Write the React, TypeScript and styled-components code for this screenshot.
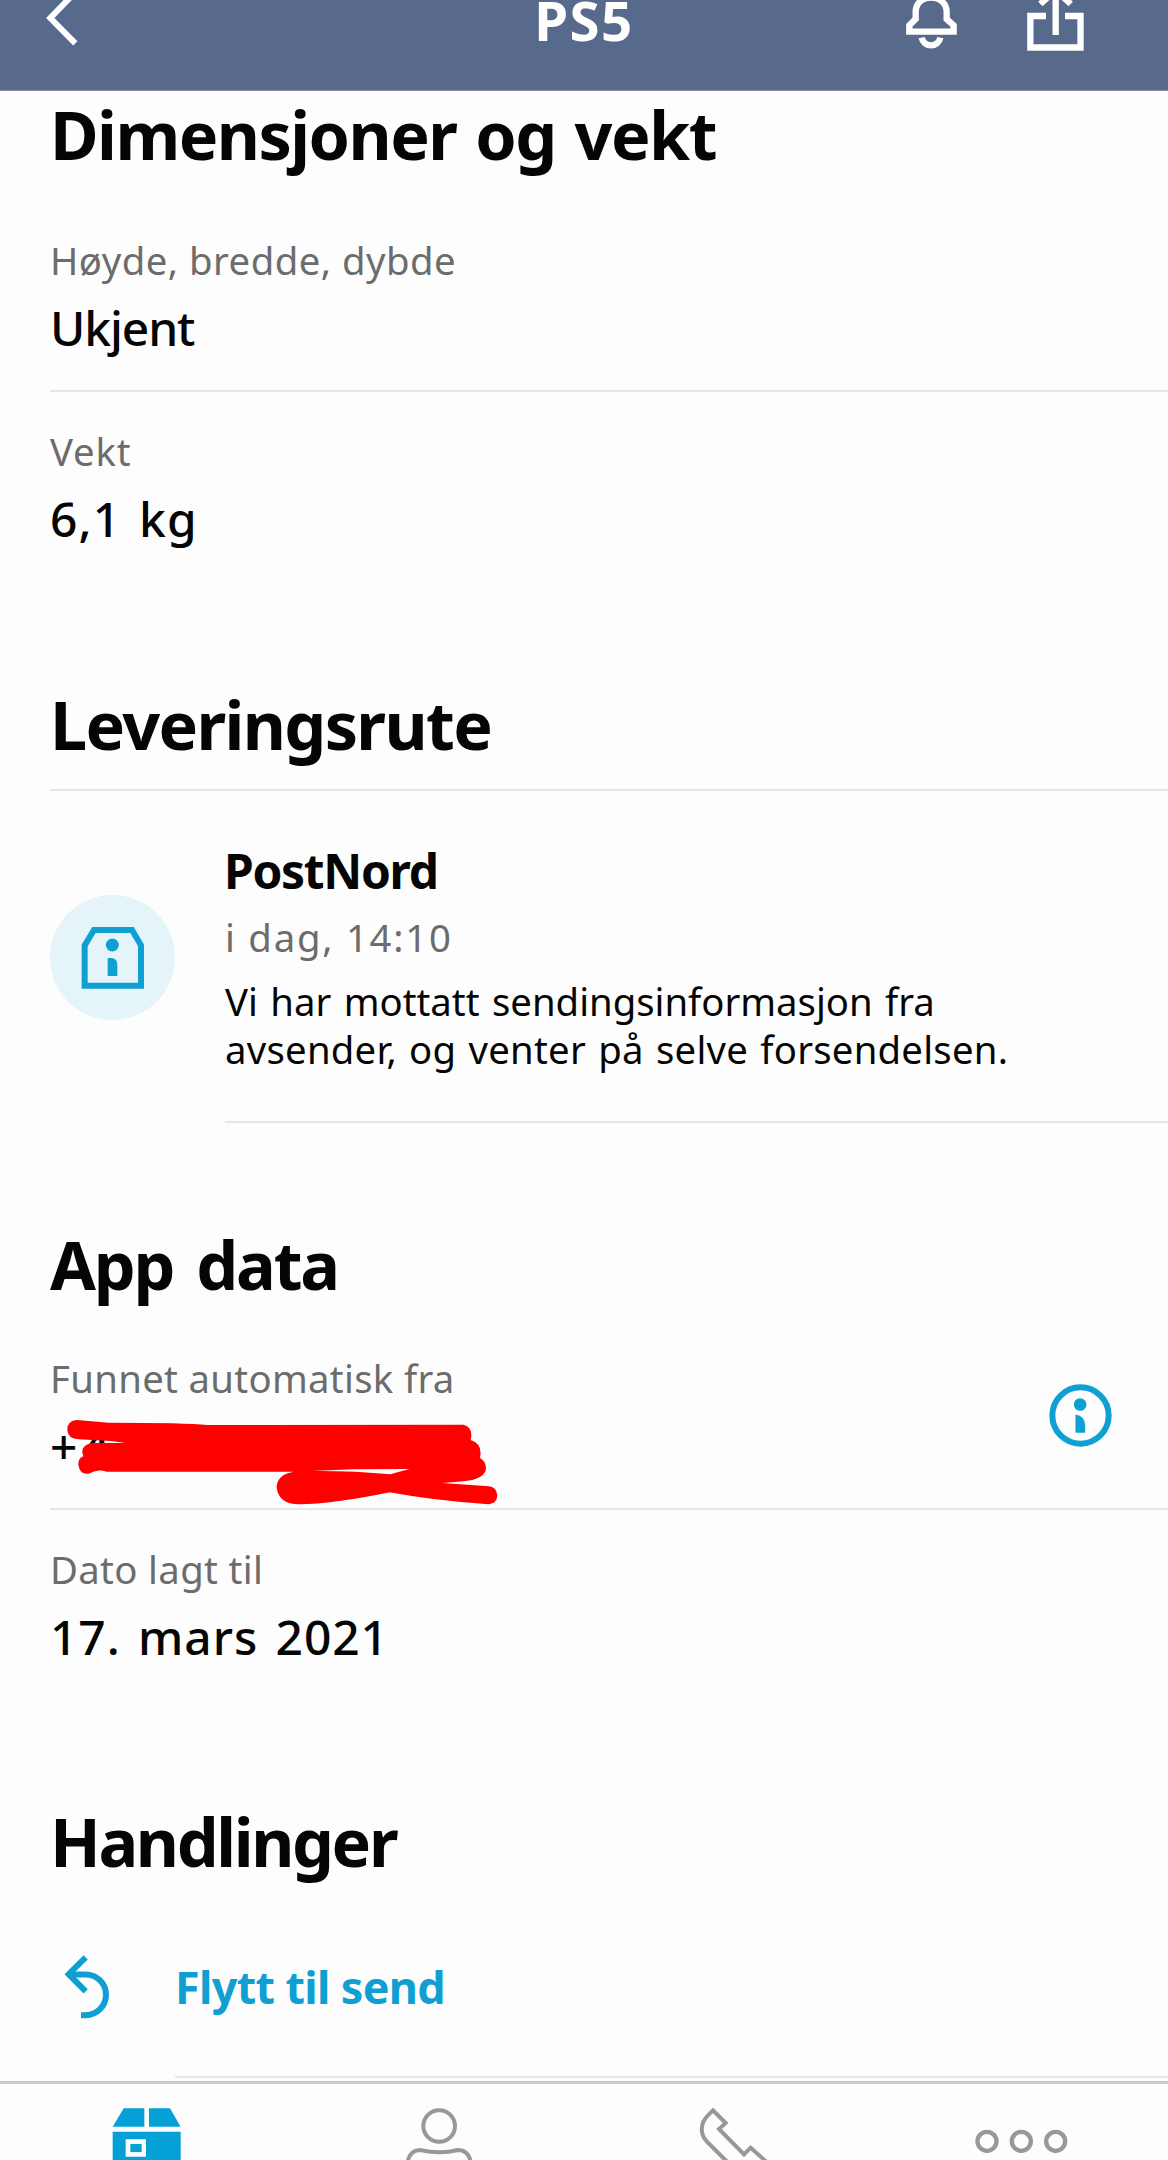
import React from "react";
import styled, { createGlobalStyle } from "styled-components";

const blue = "#0f9fd2";
const rule = "#e6e6e6";

const GlobalStyle = createGlobalStyle`
  * { box-sizing: border-box; }
  body {
    margin: 0;
    background: #fdfdfd;
    font-family: "Noto Sans", "Open Sans", sans-serif;
    color: #050505;
  }
`;

const Screen = styled.div`
  display: flex;
  flex-direction: column;
  width: 1168px;
  height: 2160px;
  overflow: hidden;
  background: #fdfdfd;
`;

const TopBar = styled.header`
  display: grid;
  grid-template-columns: 1fr auto 1fr;
  align-items: start;
  flex: none;
  height: 91px;
  padding: 0 84px 0 44px;
  background: #576a8b;
  border-bottom: 1px solid #8b8d9f;
  color: #fff;
`;

const Title = styled.h1<{ $track: number }>`
  margin: 0 0 0 40px;
  font-size: 54.6px;
  font-weight: 700;
  line-height: 40px;
  letter-spacing: ${(p) => p.$track}px;
`;

const BarActions = styled.div`
  display: flex;
  justify-content: flex-end;
  gap: 70px;
`;

const Glyph = styled.svg<{ $w: number; $h: number }>`
  display: block;
  flex: none;
  width: ${(p) => p.$w}px;
  height: ${(p) => p.$h}px;
`;

const Content = styled.main`
  flex: 1;
  min-height: 0;
  padding: 3px 0 0 50px;
`;

const Section = styled.section<{ $top?: number }>`
  padding-top: ${(p) => p.$top ?? 0}px;
`;

const Heading = styled.h2<{ $track: number; $gap?: number; $word?: number }>`
  margin: 0 0 ${(p) => p.$gap ?? 0}px;
  font-size: 66.4px;
  font-weight: 700;
  line-height: 80px;
  letter-spacing: ${(p) => p.$track}px;
  word-spacing: ${(p) => p.$word ?? 0}px;
  white-space: nowrap;
`;

const Field = styled.div<{ $line?: boolean }>`
  display: flex;
  align-items: center;
  justify-content: space-between;
  padding: 35px 56px 32px 0;
  border-bottom: ${(p) => (p.$line ? `2px solid ${rule}` : "none")};
`;

const FieldText = styled.div`
  display: flex;
  flex-direction: column;
  gap: 14px;
`;

const Label = styled.div<{ $track: number }>`
  font-size: 38.3px;
  line-height: 48px;
  letter-spacing: ${(p) => p.$track}px;
  color: #6c6c6c;
  white-space: nowrap;
`;

const Value = styled.div<{ $track: number; $word?: number }>`
  position: relative;
  font-size: 47.9px;
  font-weight: 500;
  line-height: 60px;
  letter-spacing: ${(p) => p.$track}px;
  word-spacing: ${(p) => p.$word ?? 0}px;
  white-space: nowrap;
`;

const Scribble = styled.svg`
  position: absolute;
  left: 16.7px;
  top: 3px;
  width: 431.7px;
  height: 86.7px;
`;

const Timeline = styled.div`
  margin-top: 25px;
  border-top: 2px solid ${rule};
`;

const Event = styled.div`
  display: flex;
  align-items: center;
  gap: 50px;
`;

const EventBody = styled.div`
  flex: 1;
  padding: 50px 0 48px;
  border-bottom: 2px solid ${rule};
`;

const Carrier = styled.h3`
  margin: 0 0 12px -1px;
  font-size: 47.9px;
  font-weight: 700;
  line-height: 60px;
  letter-spacing: -1.3px;
`;

const Message = styled.p`
  display: flex;
  flex-direction: column;
  margin: 16px 0 0;
  font-size: 38.3px;
  line-height: 48px;
  white-space: nowrap;
`;

const MessageLine = styled.span<{ $track: number; $word: number }>`
  letter-spacing: ${(p) => p.$track}px;
  word-spacing: ${(p) => p.$word}px;
`;

const Action = styled.div`
  display: flex;
  align-items: flex-start;
  padding: 72px 0 0 13px;
  gap: 62px;
  color: ${blue};
`;

const ActionText = styled.div`
  flex: 1;
  height: 125px;
  padding-top: 4px;
  border-bottom: 2px solid ${rule};
  font-size: 44.9px;
  font-weight: 700;
  line-height: 60px;
  letter-spacing: -0.65px;
`;

const TabBar = styled.nav`
  display: grid;
  grid-template-columns: repeat(4, 1fr);
  justify-items: center;
  align-items: end;
  flex: none;
  height: 79px;
  border-top: 3px solid #cacaca;
  background: #fdfdfd;
`;

function BackIcon() {
  return (
    <Glyph $w={36} $h={50} viewBox="44 0 36 50" fill="none" stroke="#fff" strokeWidth={6}>
      <path d="M75 -7.5 50.300 18 75.3 43.4" />
    </Glyph>
  );
}

function BellIcon() {
  return (
    <Glyph $w={51} $h={51} viewBox="138 0 153 153" fill="none" stroke="#fff" strokeWidth={19}>
      <path d="M148 95V76L167 57V37C167 9 187 -7 213 -7S260 9 260 37V57L281 76V95Z" />
      <path d="M185 113A28.5 28.5 0 0 0 241 113" />
    </Glyph>
  );
}

function ShareIcon() {
  return (
    <Glyph $w={56.7} $h={51} viewBox="501 0 170 153" fill="none" stroke="#fff" strokeWidth={19}>
      <path d="M558 48H511V142.5H661.5V48H615" />
      <path d="M587 105V-25M541 12 587 -30 632 12" />
    </Glyph>
  );
}

function ParcelInfoIcon() {
  return (
    <Glyph $w={125} $h={125} viewBox="29 42 375 375">
      <circle cx={216.5} cy={229.5} r={187.5} fill="#e4f4f9" />
      <path d="M133 314V193L161 147H275L302 193V314Z" fill="none" stroke={blue} strokeWidth={18} />
      <circle cx={216} cy={192} r={19.5} fill={blue} />
      <path d="M202 231H212Q231 231 231 252V285H202Z" fill={blue} />
    </Glyph>
  );
}

function InfoIcon() {
  return (
    <Glyph $w={63} $h={63} viewBox="147.5 126.5 189 189">
      <circle cx={242} cy={221} r={84.5} fill="none" stroke={blue} strokeWidth={18} />
      <circle cx={241} cy={188} r={19} fill={blue} />
      <path d="M227 218Q256 222 256 252V273H227Z" fill={blue} />
    </Glyph>
  );
}

function ReturnIcon() {
  return (
    <Glyph $w={50} $h={66.7} viewBox="190 100 150 200" fill="none" stroke={blue} strokeWidth={18}>
      <path d="M258 113 207 163.5 258 215" />
      <path d="M210 164.5H258A61 61 0 0 1 258 286.5H244" />
    </Glyph>
  );
}

function PackageTab() {
  return (
    <Glyph $w={100} $h={76} viewBox="288 492 300 228" fill="#05a1d6">
      <path d="M371 565H433V620H338ZM447 565H510L542 620H447Z" />
      <path fillRule="evenodd" d="M338 635H542V760H338ZM377 658V710H438V658ZM391 672H425V696H391Z" />
    </Glyph>
  );
}

function PersonTab() {
  return (
    <Glyph $w={100} $h={76} viewBox="1164 492 300 228" fill="none" stroke="#989898" strokeWidth={12}>
      <circle cx={1317.5} cy={618} r={47.5} />
      <path d="M1222 728Q1230 690 1260 690Q1290 697 1318 697Q1346 697 1374 690Q1405 690 1413 728" />
    </Glyph>
  );
}

function PhoneTab() {
  return (
    <Glyph $w={100} $h={76} viewBox="900 72 300 228" fill="none" stroke="#989898" strokeWidth={12}>
      <path d="M1042 306 982 246C958 222 961 188 984 166L999 151 1037 189 1017 207 1092 283 1112 263 1160 306" />
    </Glyph>
  );
}

function MoreTab() {
  return (
    <Glyph $w={100} $h={76} viewBox="156 72 300 228" fill="none" stroke="#989898" strokeWidth={13}>
      <circle cx={201} cy={244} r={28.5} />
      <circle cx={304} cy={244} r={28.5} />
      <circle cx={407} cy={244} r={28.5} />
    </Glyph>
  );
}

export default function App() {
  return (
    <>
      <GlobalStyle />
      <Screen>
        <TopBar>
          <BackIcon />
          <Title $track={1.5}>PS5</Title>
          <BarActions>
            <BellIcon />
            <ShareIcon />
          </BarActions>
        </TopBar>

        <Content>
          <Section>
            <Heading $track={-1.5} $word={3} $gap={27}>Dimensjoner og vekt</Heading>
            <Field $line>
              <FieldText>
                <Label $track={0.48}>Høyde, bredde, dybde</Label>
                <Value $track={-1.1}>Ukjent</Value>
              </FieldText>
            </Field>
            <Field>
              <FieldText>
                <Label $track={0.8}>Vekt</Label>
                <Value $track={1.2} $word={4}>6,1 kg</Value>
              </FieldText>
            </Field>
          </Section>

          <Section $top={103}>
            <Heading $track={-1.62}>Leveringsrute</Heading>
            <Timeline>
              <Event>
                <ParcelInfoIcon />
                <EventBody>
                  <Carrier>PostNord</Carrier>
                  <Label $track={1.75}>i dag, 14:10</Label>
                  <Message>
                    <MessageLine $track={0} $word={2.5}>Vi har mottatt sendingsinformasjon fra</MessageLine>
                    <MessageLine $track={0.25} $word={2}>avsender, og venter på selve forsendelsen.</MessageLine>
                  </Message>
                </EventBody>
              </Event>
            </Timeline>
          </Section>

          <Section $top={101}>
            <Heading $track={-2.2} $word={8} $gap={15}>App data</Heading>
            <Field $line>
              <FieldText>
                <Label $track={0.32}>Funnet automatisk fra</Label>
                <Value $track={5}>
                  +4
                  <Scribble viewBox="200 595 1295 260" fill="#fe0000">
                    <path d="M230 598Q200 600 201 628Q203 655 235 656L330 661 375 667H275Q245 672 246 695Q246 702 250 706Q233 712 234 732Q238 762 265 759Q280 752 300 749L320 753H880Q828 762 829 802Q836 850 895 851Q1000 850 1168 815Q1300 840 1465 851Q1490 848 1491 824Q1488 798 1465 797L1325 787 1390 782Q1456 775 1457 742Q1455 720 1439 712Q1448 670 1411 658Q1420 620 1390 612L620 613Q560 606 325 606Z" />
                    <path fill="#fdfdfd" d="M935 751 1060 746 1228 745Q1200 752 1170 761Q1060 750 935 751Z" />
                  </Scribble>
                </Value>
              </FieldText>
              <InfoIcon />
            </Field>
            <Field>
              <FieldText>
                <Label $track={0.34}>Dato lagt til</Label>
                <Value $track={0.95} $word={4}>17. mars 2021</Value>
              </FieldText>
            </Field>
          </Section>

          <Section $top={102}>
            <Heading $track={-2.35}>Handlinger</Heading>
            <Action>
              <ReturnIcon />
              <ActionText>Flytt til send</ActionText>
            </Action>
          </Section>
        </Content>

        <TabBar>
          <PackageTab />
          <PersonTab />
          <PhoneTab />
          <MoreTab />
        </TabBar>
      </Screen>
    </>
  );
}
